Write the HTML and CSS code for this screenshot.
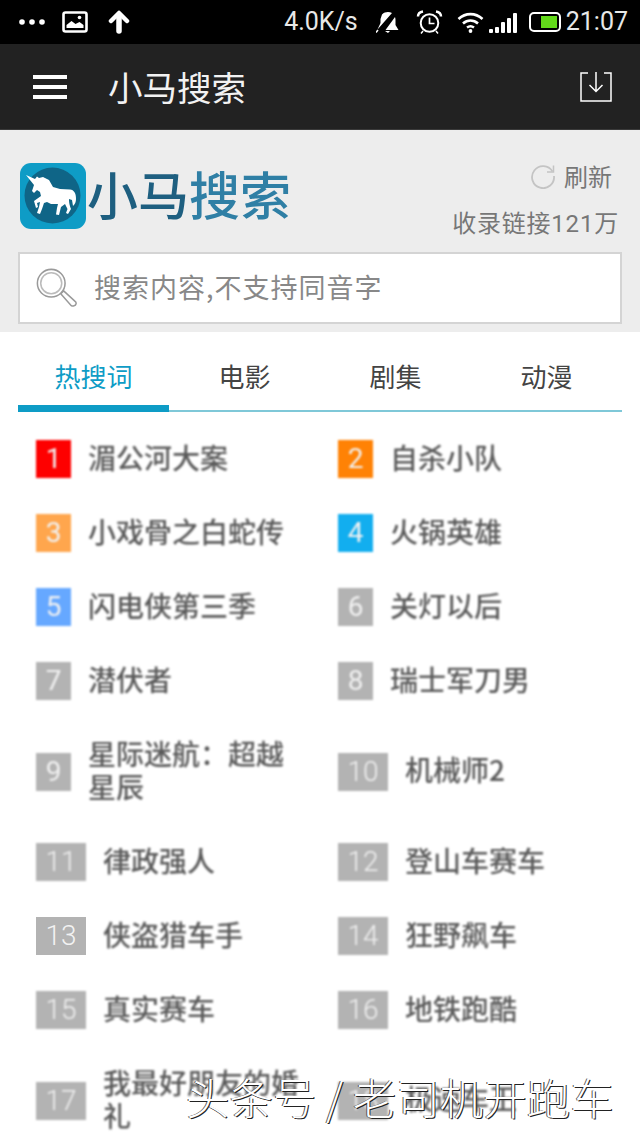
FILE: index.html
```html
<!DOCTYPE html>
<html lang="zh">
<head>
<meta charset="utf-8">
<title>小马搜索</title>
<link rel="stylesheet" href="styles.css">
</head>
<body>
<div class="phone">
  <div class="statusbar">
    <div class="status-left">
      <svg class="ic" width="28" height="8" viewBox="0 0 28 8"><circle cx="4" cy="4" r="2.800"/><circle cx="14" cy="4" r="2.800"/><circle cx="24" cy="4" r="2.800"/></svg>
      <svg class="ic" width="26" height="22" viewBox="0 0 26 22"><rect x="1.500" y="1.500" width="23" height="19" rx="2" fill="none" stroke="#fff" stroke-width="2.600"/><path d="M4.500 17v-3l5-4 4 3 4-2 4 3v3z"/><circle cx="17.500" cy="6.500" r="1.800"/></svg>
      <svg class="ic arrow" width="22" height="24" viewBox="0 0 22 24" fill="none" stroke="#fff" stroke-linecap="round" stroke-linejoin="round"><path d="M11 21V6" stroke-width="5.500"/><path d="M3 11l8-8 8 8" stroke-width="4.500"/></svg>
    </div>
    <div class="status-right">
      <span class="speed">4.0K/s</span>
      <svg class="ic bell" width="23" height="22" viewBox="0 0 23 22"><path d="M6 3.500C9 .5 13 .5 16 2L1.500 18.500 4.500 12V8z"/><path d="M19 6c.3 1 .5 2 .5 3v5l3 5H9.500z"/><path d="M9 20h5l-2 2z"/><path d="M0 21.500L2 19" stroke="#fff" stroke-width="1.500"/></svg>
      <svg class="line alarm" width="27" height="24" viewBox="0 0 27 24"><circle cx="13.500" cy="13" r="8.800" stroke-width="2"/><path d="M13.500 7.500V13.500h5" stroke-width="1.700"/><path d="M2 6.500C2 3.500 4 2 7 1.500M25 6.500C25 3.500 23 2 20 1.500" stroke-width="2.500"/><path d="M7 21l-2 2.500M20 21l2 2.500" stroke-width="1.500"/></svg>
      <svg class="line wifi" width="27" height="22" viewBox="0 0 27 22"><path d="M1.500 8c7-6.500 17-6.500 24 0" stroke-width="2.600"/><path d="M6 12.500c4.500-4 10.500-4 15 0" stroke-width="2.600"/><path d="M10 16.500c2-1.500 5-1.500 7 0" stroke-width="2.400"/><circle cx="13.500" cy="20" r="1.900" fill="#fff" stroke="none"/></svg>
      <div class="signal"><i class="s1"></i><i class="s2"></i><i class="s3"></i><i class="s4"></i><i class="s5"></i></div>
      <div class="battery"><div class="battery-fill"></div></div>
      <span class="clock">21:07</span>
    </div>
  </div>

  <header class="toolbar">
    <div class="burger"><i></i><i></i><i></i></div>
    <h1 class="toolbar-title">小马搜索</h1>
    <svg class="download" width="34" height="32" viewBox="0 0 34 32" fill="none" stroke="#fff" stroke-width="1.500"><path d="M9 2H2v28h30V2h-7"/><path d="M17 1v19M10.500 14l6.500 6.500 6.500-6.500"/></svg>
  </header>

  <section class="hero">
    <div class="hero-top">
      <div class="brand">
        <svg class="logo" width="66" height="66" viewBox="0 0 66 66">
          <rect width="66" height="66" rx="11" fill="#0e9cc6"/>
          <circle cx="32.500" cy="32.500" r="28" fill="#0f6587"/>
          <path fill="#fff" d="M6 12L15 16L17 13.500L19 15L23 14L29 17L33 24L40 26L50 26.500C54 27 56 30 56 36C56 39 55 41 53 43L52 37L49 36C49 41 50 43 51 46L48 51L46 50L47.500 46L45 41L41 44L39 52L36 51.500L37 45L38 41L31 41L27 39L24 40L22 46L20 51L17 50L19 44L20 39L17 40L18 44L16 45L14 38L21 33L20 29L17 27L14 30L12 28L14 22z"/>
        </svg>
        <div class="brand-name"><span class="dark">小马</span><span class="mid">搜索</span></div>
      </div>
      <div class="hero-meta">
        <div class="refresh">
          <svg width="26" height="26" viewBox="0 0 26 26" fill="none" stroke="#c4c4c4" stroke-width="1.800"><path d="M22.500 8.500A11 11 0 1 0 24 13"/><path d="M23.500 2.500v6.500h-6.500" stroke-width="1.500"/></svg>
          <span>刷新</span>
        </div>
        <div class="indexed">收录链接121万</div>
      </div>
    </div>
    <div class="search">
      <svg width="42" height="42" viewBox="0 0 44 44" fill="none" stroke="#9a9a9a" stroke-width="1.600"><circle cx="17" cy="17" r="14.500"/><circle cx="17" cy="17" r="11" stroke="#bbb"/><path d="M27 28l3-3 12 11a2.500 2.500 0 0 1-1 4.500 3 3 0 0 1-3 0z"/></svg>
      <span class="placeholder">搜索内容,不支持同音字</span>
    </div>
  </section>

  <nav class="tabs">
    <div class="tab active">热搜词</div>
    <div class="tab">电影</div>
    <div class="tab">剧集</div>
    <div class="tab">动漫</div>
  </nav>

  <ul class="ranks">
    <li class="rank"><b class="num red">1</b><span class="name">湄公河大案</span></li>
    <li class="rank"><b class="num orange">2</b><span class="name">自杀小队</span></li>
    <li class="rank"><b class="num amber">3</b><span class="name">小戏骨之白蛇传</span></li>
    <li class="rank"><b class="num sky">4</b><span class="name">火锅英雄</span></li>
    <li class="rank"><b class="num blue">5</b><span class="name">闪电侠第三季</span></li>
    <li class="rank"><b class="num">6</b><span class="name">关灯以后</span></li>
    <li class="rank"><b class="num">7</b><span class="name">潜伏者</span></li>
    <li class="rank"><b class="num">8</b><span class="name">瑞士军刀男</span></li>
    <li class="rank tall"><b class="num">9</b><span class="name">星际迷航：超越<br>星辰</span></li>
    <li class="rank tall"><b class="num two">10</b><span class="name">机械师2</span></li>
    <li class="rank"><b class="num two">11</b><span class="name">律政强人</span></li>
    <li class="rank"><b class="num two">12</b><span class="name">登山车赛车</span></li>
    <li class="rank"><b class="num two sharp">13</b><span class="name">侠盗猎车手</span></li>
    <li class="rank"><b class="num two">14</b><span class="name">狂野飙车</span></li>
    <li class="rank"><b class="num two">15</b><span class="name">真实赛车</span></li>
    <li class="rank"><b class="num two">16</b><span class="name">地铁跑酷</span></li>
    <li class="rank tall"><b class="num two">17</b><span class="name">我最好朋友的婚<br>礼</span></li>
    <li class="rank tall"><b class="num two">18</b><span class="name">极速车王</span></li>
  </ul>

  <div class="watermark">头条号 / 老司机开跑车</div>
</div>
</body>
</html>
```

FILE: styles.css
```css
* { box-sizing: border-box; }
html, body { margin: 0; padding: 0; }
body { background: #fff; font-family: "Noto Sans CJK SC", "Roboto", sans-serif; }
.phone { position: relative; width: 640px; height: 1138px; overflow: hidden; background: #fff; }

.statusbar { height: 44px; background: #000; display: flex; justify-content: space-between; align-items: center; padding: 0 12px 0 18px; color: #e8e8e8; }
.status-left { display: flex; align-items: center; gap: 16px; }
.status-right { display: flex; align-items: center; }
.ic { fill: #fff; display: block; }
.line { fill: none; stroke: #fff; display: block; }
.arrow { fill: none; margin-left: 4px; }
.speed { font: 400 25px/44px "Roboto", sans-serif; margin-right: 18px; }
.bell { margin-right: 17px; }
.alarm { margin-right: 14px; }
.wifi { margin-right: 5px; }
.signal { display: flex; align-items: flex-end; gap: 2px; height: 20px; margin: 1px 12px 0 0; }
.signal i { display: block; width: 4px; background: #fff; border-radius: 1px; }
.s1 { height: 4px; } .s2 { height: 6px; } .s3 { height: 11px; } .s4 { height: 15px; } .s5 { height: 20px; }
.battery { position: relative; width: 32px; height: 20px; border: 2px solid #fff; border-radius: 5px; padding: 2px 2px 2px 10px; margin-right: 5px; }
.battery-fill { width: 100%; height: 100%; background: #63d91a; }
.clock { font: 400 25px/44px "Roboto", sans-serif; }

.toolbar { height: 86px; background: #222; display: flex; align-items: center; padding: 0 27px 0 33px; border-bottom: 1px solid #3a3a3a; }
.burger { width: 34px; display: flex; flex-direction: column; gap: 6px; margin-right: 41px; }
.burger i { display: block; height: 4px; background: #fff; }
.toolbar-title { flex: 1; margin: 0; font-size: 34.500px; font-weight: 400; line-height: 1; color: #f2f2f2; }

.hero { height: 202px; background: #ededed; padding: 32px 18px 0; }
.hero-top { display: flex; justify-content: space-between; }
.brand { display: flex; align-items: center; margin-left: 2px; height: 68px; gap: 1px; }
.brand-name { font-size: 51px; line-height: 1; font-weight: 500; padding-bottom: 6px; }
.dark { color: #1e5f80; }
.mid { color: #2f7fa5; }
.hero-meta { text-align: right; margin-right: 3px; }
.refresh { display: flex; justify-content: flex-end; align-items: center; gap: 8px; font-size: 24px; line-height: 32px; color: #777; margin: -2px 7px 16px 0; }
.indexed { font-size: 24px; line-height: 32px; letter-spacing: .8px; color: #777; font-family: "Roboto", "Noto Sans CJK SC", sans-serif; }
.search { margin-top: 12px; height: 72px; background: #fff; border: 2px solid #d4d4d4; display: flex; align-items: center; padding-left: 15px; gap: 17px; }
.placeholder { font-size: 27px; line-height: 32px; letter-spacing: 1px; color: #888; padding-bottom: 3px; }

.tabs { display: grid; grid-template-columns: repeat(4, 151px); margin: 0 18px; height: 80px; border-bottom: 2px solid #7fc8d8; }
.tab { height: 80px; padding-top: 25px; text-align: center; font-size: 26px; line-height: 38px; color: #444; }
.tab.active { color: #0e9cc6; border-bottom: 7px solid #0e9cc6; }

.ranks { list-style: none; margin: 0; padding: 10px 0 0 36px; display: grid; grid-template-columns: 302px 302px; }
.rank { display: flex; align-items: center; min-width: 0; height: 74px; }
.rank.tall { height: 107px; }
.num { flex: none; width: 35px; height: 38px; background: #b3b3b3; color: #f2f2f2; font: 400 28px/38px "Roboto", sans-serif; text-align: center; filter: blur(.8px); }
.num.two { width: 50px; font-weight: 300; }
.num.sharp { filter: none; }
.num.red { background: #fe0000; }
.num.orange { background: #ff8205; }
.num.amber { background: #ffa64d; }
.num.sky { background: #12aeef; }
.num.blue { background: #66a8ff; }
.name { margin: 0 0 4px 17px; padding: 2px 0; font-size: 28px; line-height: 33px; font-weight: 500; color: #5a5a5a; filter: blur(1px); }

.watermark { position: absolute; left: 186px; top: 1069px; font-size: 43.500px; line-height: 56px; white-space: nowrap; color: #fff; text-shadow: 1px 1px 0 #222, -1px 0 0 #555; font-weight: 300; }
```
